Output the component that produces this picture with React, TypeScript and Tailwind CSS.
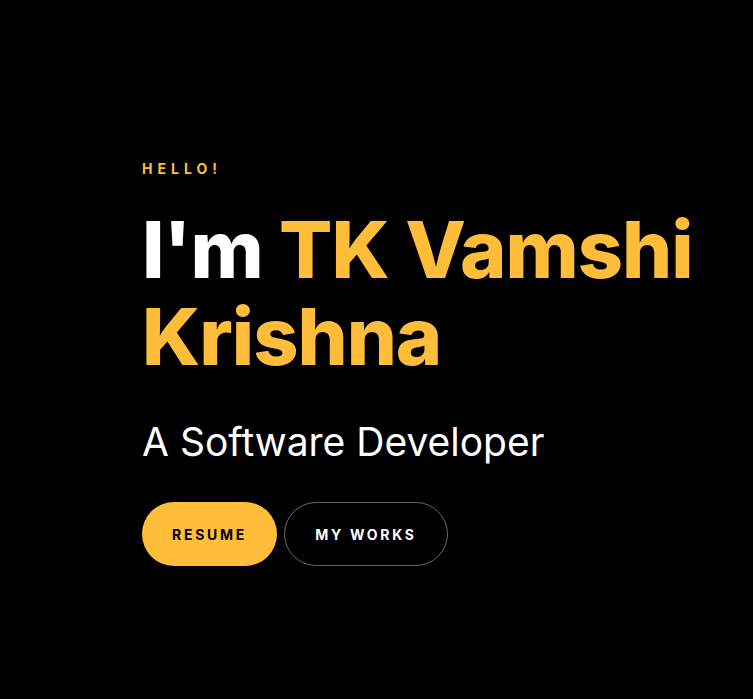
export default function App() {
  return (
    <div className="min-h-[699px] w-full bg-black" style={{ fontFamily: "Inter, 'Noto Sans', sans-serif" }}>
      <div className="pl-[142px] pt-[159px]">
        <div className="text-[14px] font-bold leading-[20px] tracking-[5px] text-[#ffbd39]">HELLO!</div>
        <h1 className="mt-[27px] whitespace-nowrap text-[79px] font-extrabold leading-[87px] tracking-[-1px] text-white">
          <span>I'm </span>
          <span className="text-[#ffbd39]">TK Vamshi</span>
          <br />
          <span className="text-[#ffbd39]">Krishna</span>
        </h1>
        <div className="mt-[38px] text-[39px] font-normal leading-[48px] text-white">A Software Developer</div>
        <div className="mt-[36px] flex gap-[7px]">
          <button className="flex h-[64px] w-[135px] items-center justify-center rounded-full bg-[#ffbd39] text-[14px] font-bold tracking-[2.7px] text-black">
            RESUME
          </button>
          <button className="flex h-[64px] w-[164px] items-center justify-center rounded-full border border-[#666] bg-black text-[14px] font-bold tracking-[2.7px] text-white">
            MY WORKS
          </button>
        </div>
      </div>
    </div>
  );
}
